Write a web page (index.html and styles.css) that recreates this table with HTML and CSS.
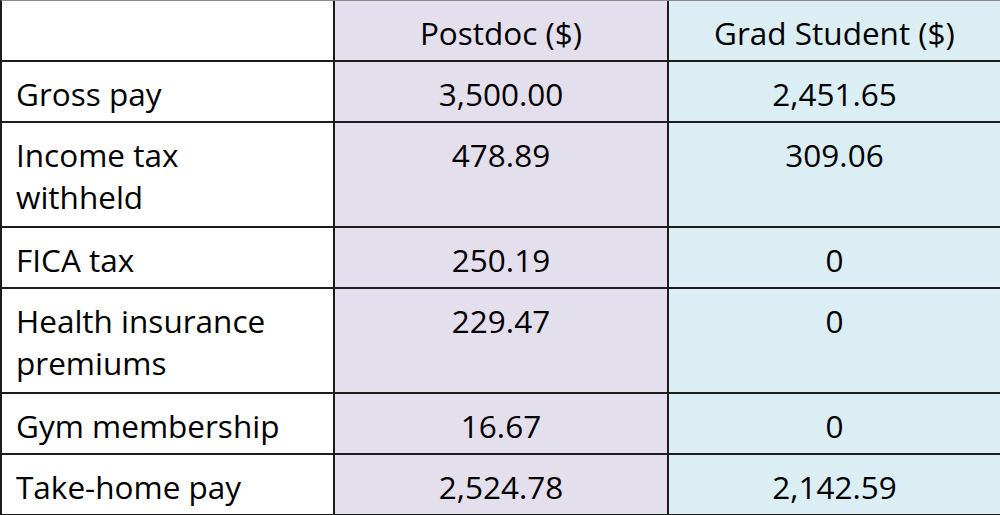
FILE: index.html
```html
<!DOCTYPE html>
<html>
<head>
<meta charset="utf-8">
<link rel="stylesheet" href="styles.css">
</head>
<body>
<table class="pay">
  <colgroup><col class="c1"><col class="c2"><col class="c3"></colgroup>
  <tr class="r1"><th class="label"></th><th class="pd">Postdoc ($)</th><th class="gs">Grad Student ($)</th></tr>
  <tr class="r1"><td class="label">Gross pay</td><td class="pd">3,500.00</td><td class="gs">2,451.65</td></tr>
  <tr class="r2"><td class="label">Income tax withheld</td><td class="pd">478.89</td><td class="gs">309.06</td></tr>
  <tr class="r1"><td class="label">FICA tax</td><td class="pd">250.19</td><td class="gs">0</td></tr>
  <tr class="r2"><td class="label">Health insurance premiums</td><td class="pd">229.47</td><td class="gs">0</td></tr>
  <tr class="r1"><td class="label">Gym membership</td><td class="pd">16.67</td><td class="gs">0</td></tr>
  <tr class="r1"><td class="label">Take-home pay</td><td class="pd">2,524.78</td><td class="gs">2,142.59</td></tr>
</table>
</body>
</html>
```
FILE: styles.css
```css
html, body {
  margin: 0;
  padding: 0;
  background: #ffffff;
}
.pay {
  border-collapse: separate;
  border-spacing: 0;
  width: 1000px;
  height: 515px;
  table-layout: fixed;
  font-family: "Open Sans", sans-serif;
  font-size: 31.5px;
  line-height: 42px;
  color: #000;
  border-left: 2px solid #1c1c1c;
  border-top: 1px solid #8a8a8a;
}
.c1 { width: 333px; }
.c2 { width: 334px; }
.c3 { width: 333px; }
.pay th, .pay td {
  border-right: 2px solid #1c1c1c;
  border-bottom: 2px solid #1c1c1c;
  padding: 11px 6px 6px 6px;
  vertical-align: top;
  font-weight: normal;
  text-align: center;
  box-sizing: border-box;
}
.pay .label {
  text-align: left;
  padding-left: 14px;
  padding-right: 40px;
  background: #ffffff;
}
.pay .pd { background: #e4dfec; }
.pay .gs { background: #daeef3; }
.r1 { height: 61px; }
.r2 { height: 105px; }
.pay tr:first-child th { height: 60px; }
```
